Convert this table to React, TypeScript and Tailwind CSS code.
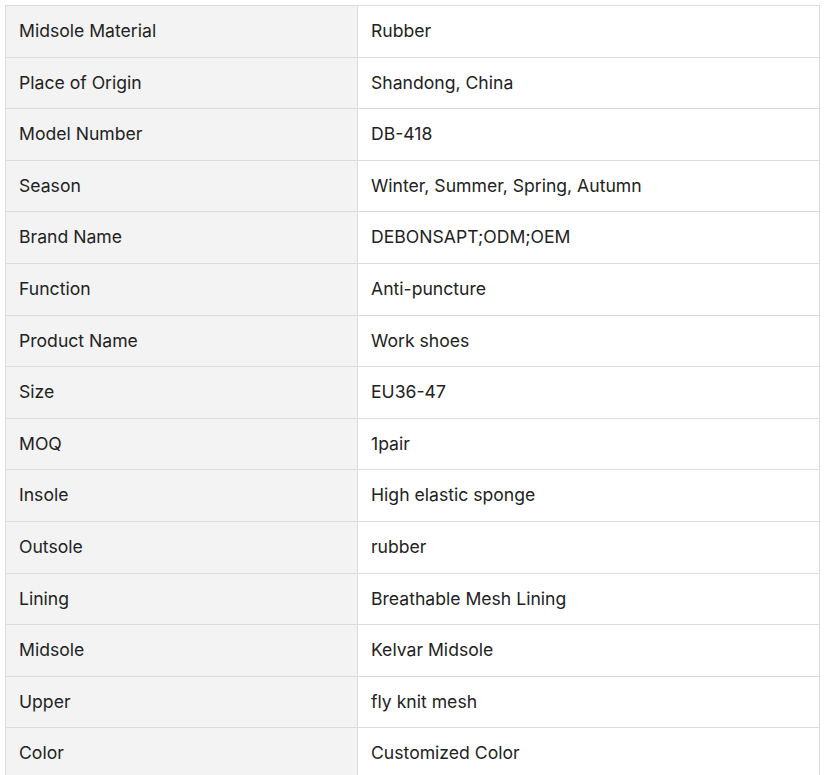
const specs: [string, string][] = [
  ['Midsole Material', 'Rubber'],
  ['Place of Origin', 'Shandong, China'],
  ['Model Number', 'DB-418'],
  ['Season', 'Winter, Summer, Spring, Autumn'],
  ['Brand Name', 'DEBONSAPT;ODM;OEM'],
  ['Function', 'Anti-puncture'],
  ['Product Name', 'Work shoes'],
  ['Size', 'EU36-47'],
  ['MOQ', '1pair'],
  ['Insole', 'High elastic sponge'],
  ['Outsole', 'rubber'],
  ['Lining', 'Breathable Mesh Lining'],
  ['Midsole', 'Kelvar Midsole'],
  ['Upper', 'fly knit mesh'],
  ['Color', 'Customized Color'],
]

export default function App() {
  return (
    <div className="min-h-[775px] bg-white pl-[5px] pr-[4px] pt-[5px] font-['Inter',sans-serif] text-[17.6px] text-[#222]">
      <table className="w-full border-collapse">
        <tbody>
          {specs.map(([label, value]) => (
            <tr key={label}>
              <td className="w-[352px] border border-[#dcdcdc] bg-[#f3f3f3] px-[13px] py-3 leading-[26.6px]">
                {label}
              </td>
              <td className="border border-[#dcdcdc] bg-white px-[13px] py-3 leading-[26.6px]">
                {value}
              </td>
            </tr>
          ))}
        </tbody>
      </table>
    </div>
  )
}
